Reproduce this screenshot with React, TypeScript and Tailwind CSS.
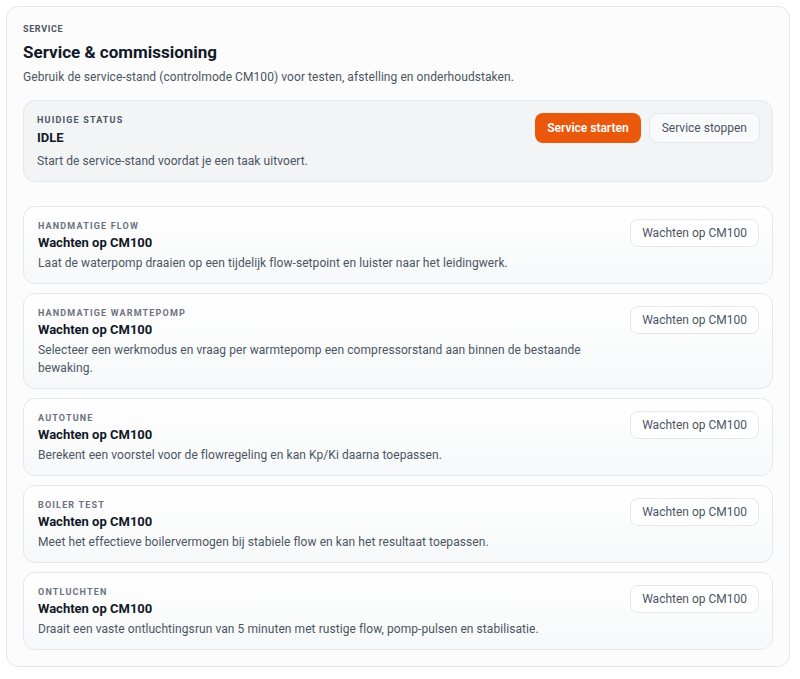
import React from "react";

interface Task {
  label: string;
  status: string;
  description: string;
}

const tasks: Task[] = [
  {
    label: "Handmatige flow",
    status: "Wachten op CM100",
    description:
      "Laat de waterpomp draaien op een tijdelijk flow-setpoint en luister naar het leidingwerk.",
  },
  {
    label: "Handmatige warmtepomp",
    status: "Wachten op CM100",
    description:
      "Selecteer een werkmodus en vraag per warmtepomp een compressorstand aan binnen de bestaande bewaking.",
  },
  {
    label: "Autotune",
    status: "Wachten op CM100",
    description: "Berekent een voorstel voor de flowregeling en kan Kp/Ki daarna toepassen.",
  },
  {
    label: "Boiler test",
    status: "Wachten op CM100",
    description:
      "Meet het effectieve boilervermogen bij stabiele flow en kan het resultaat toepassen.",
  },
  {
    label: "Ontluchten",
    status: "Wachten op CM100",
    description:
      "Draait een vaste ontluchtingsrun van 5 minuten met rustige flow, pomp-pulsen en stabilisatie.",
  },
];

const TaskCard: React.FC<{ task: Task }> = ({ task }) => (
  <div className="flex items-start gap-4 rounded-xl border border-[#e5e7eb] bg-gradient-to-b from-white to-[#f7f8f9] pl-[14px] pr-[13px] pt-[12px] pb-[11px]">
    <div className="min-w-0 flex-1 pt-[1px]">
      <div className="text-[9px] font-bold uppercase tracking-[0.13em] text-[#6b7280] leading-[12px]">
        {task.label}
      </div>
      <div className="mt-[2px] text-[13px] font-bold text-[#111827] leading-[18px]">{task.status}</div>
      <p className="mt-[2px] text-[12px] tracking-[0.07px] leading-[18px] text-[#4b5563]">
        {task.description}
      </p>
    </div>
    <button
      type="button"
      className="shrink-0 rounded-lg border border-[#e5e7eb] bg-white px-[11px] h-[28px] text-[12px] text-[#4b5563]"
    >
      {task.status}
    </button>
  </div>
);

export default function App() {
  return (
    <div className="min-h-screen bg-white pt-[6px] pl-[6px] pr-[10px] pb-[6px] font-['Roboto',sans-serif]">
      <div className="rounded-xl border border-[#e5e7eb] bg-[#fcfcfc] px-4 pt-[16px] pb-4">
        {/* Header */}
        <div className="text-[9px] font-bold uppercase tracking-[0.07em] text-[#4b5563] leading-[12px]">
          Service
        </div>
        <h2 className="mt-[5px] text-[17px] font-bold leading-[24px] text-[#111827]">
          Service &amp; commissioning
        </h2>
        <p className="mt-[4px] text-[12px] tracking-[0.07px] leading-[18px] text-[#4b5563]">
          Gebruik de service-stand (controlmode CM100) voor testen, afstelling en onderhoudstaken.
        </p>

        {/* Status */}
        <div className="mt-[14px] flex items-start justify-between rounded-xl border border-[#e5e7eb] bg-[#f3f4f6] pl-[13px] pr-[12px] pt-[12px] pb-[11px]">
          <div>
            <div className="pt-[1px] text-[9px] font-bold uppercase tracking-[0.13em] text-[#4b5563] leading-[12px]">
              Huidige status
            </div>
            <div className="mt-[3px] text-[13px] font-bold leading-[18px] text-[#111827]">IDLE</div>
            <p className="mt-[5px] text-[12px] tracking-[0.07px] leading-[18px] text-[#4b5563]">
              Start de service-stand voordat je een taak uitvoert.
            </p>
          </div>
          <div className="flex items-center gap-2">
            <button
              type="button"
              className="h-[30px] rounded-lg bg-[#ea580c] px-[12px] text-[12px] font-semibold text-white"
            >
              Service starten
            </button>
            <button
              type="button"
              className="h-[30px] rounded-lg border border-[#e5e7eb] bg-[#f9fafb] px-[12px] text-[12px] text-[#4b5563]"
            >
              Service stoppen
            </button>
          </div>
        </div>

        {/* Tasks */}
        <div className="mt-[24px] flex flex-col gap-[9px]">
          {tasks.map((task, index) => (
            <TaskCard key={index} task={task} />
          ))}
        </div>
      </div>
    </div>
  );
}
